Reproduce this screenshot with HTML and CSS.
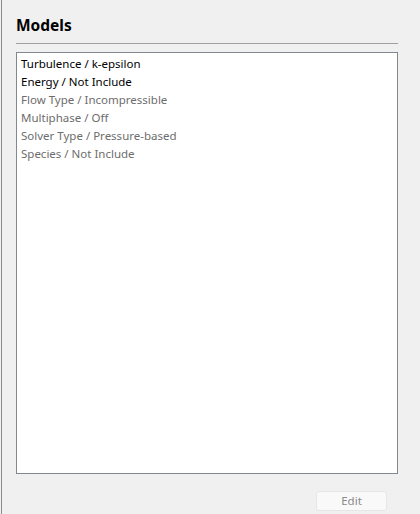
FILE: index.html
```html
<!DOCTYPE html>
<html>
<head>
<meta charset="utf-8">
<link rel="stylesheet" href="styles.css">
</head>
<body>
<div class="frame">
  <div class="panel">
    <div class="header"><h1 class="title">Models</h1></div>
    <ul class="list">
      <li class="item">Turbulence / k-epsilon</li>
      <li class="item">Energy / Not Include</li>
      <li class="item muted">Flow Type / Incompressible</li>
      <li class="item muted">Multiphase / Off</li>
      <li class="item muted">Solver Type / Pressure-based</li>
      <li class="item muted">Species / Not Include</li>
    </ul>
    <div class="actions"><button class="btn" disabled>Edit</button></div>
  </div>
</div>
</body>
</html>
```

FILE: styles.css
```css
html, body {
  margin: 0;
  padding: 0;
  background: #f0f0f0;
  font-family: "Noto Sans", "Open Sans", sans-serif;
}
.frame {
  margin-left: 1px;
  border-left: 1px solid #8c8c8c;
  height: 514px;
  box-sizing: border-box;
  overflow: hidden;
}
.panel {
  padding-left: 14px;
  padding-right: 22px;
}
.header {
  padding-top: 14px;
  padding-bottom: 7px;
  border-bottom: 1px solid #a0a0a0;
}
.title {
  margin: 0;
  font-size: 15.5px;
  line-height: 22px;
  font-weight: 700;
  color: #000;
}
.list {
  list-style: none;
  margin: 8px 0 0 0;
  padding: 2px 0 0 4px;
  height: 422px;
  box-sizing: border-box;
  background: #fff;
  border: 1px solid #828790;
}
.item {
  font-size: 11.5px;
  line-height: 18px;
  color: #000;
}
.item.muted {
  color: #6d6d6d;
}
.actions {
  display: flex;
  justify-content: flex-end;
  padding-top: 17px;
  padding-right: 11px;
}
.btn {
  width: 71px;
  height: 20px;
  box-sizing: border-box;
  background: #f9f9f9;
  border: 1px solid #e6e6e6;
  border-radius: 3px;
  font-family: "Noto Sans", "Open Sans", sans-serif;
  font-size: 11.5px;
  line-height: 16px;
  color: #8a8a8a;
  padding: 0;
}
```
